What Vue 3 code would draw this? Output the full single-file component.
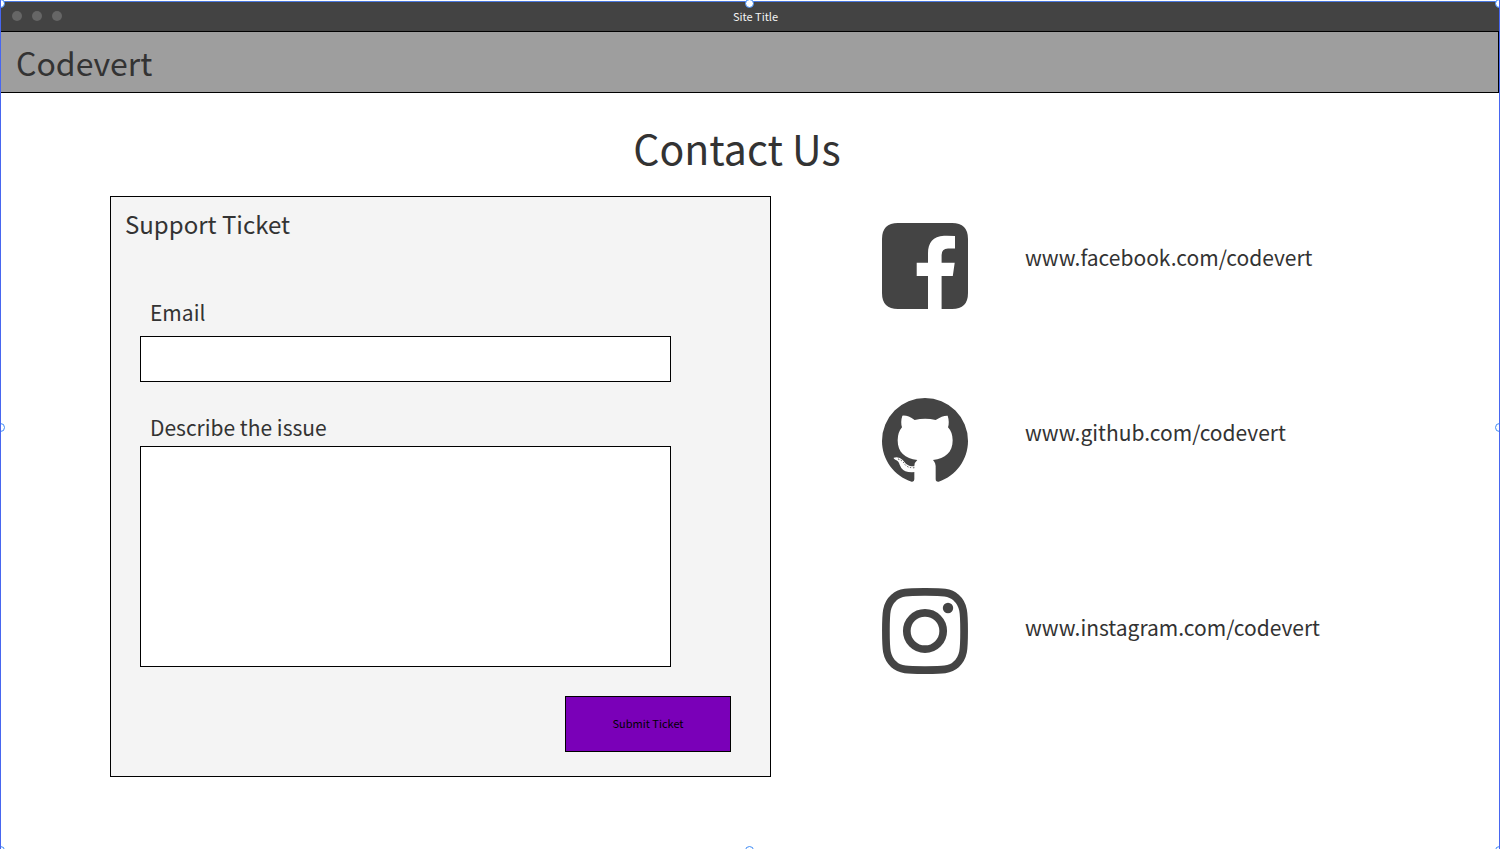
<script setup>
import { ref } from 'vue'

const email = ref('')
const issue = ref('')
const handles = ['nw', 'n', 'ne', 'w', 'e', 'sw', 's', 'se']
</script>

<template>
  <div class="frame">
    <div class="titlebar">
      <div class="dots"><i></i><i></i><i></i></div>
      <span class="site-title">Site Title</span>
    </div>
    <header class="brand-bar">
      <span class="brand">Codevert</span>
    </header>

    <main>
      <h1>Contact Us</h1>
      <div class="columns">
        <form class="ticket" @submit.prevent>
          <h2>Support Ticket</h2>
          <div class="fields">
            <label for="email">Email</label>
            <input id="email" v-model="email" type="email" />
            <label for="issue" class="issue-label">Describe the issue</label>
            <textarea id="issue" v-model="issue"></textarea>
          </div>
          <button type="submit">Submit Ticket</button>
        </form>

        <ul class="socials">
          <li>
            <svg viewBox="0 0 86 86" aria-hidden="true">
              <path fill="#444" d="M16 0H70Q86 0 86 16V70Q86 86 70 86H59.6V53H70.8L72.7 39.7H59.6V32Q59.6 25.4 66 25.4H73V12.9Q68 12.6 62 12.7C51 13 46 20 46 30V39.7H34.7V53H46V86H16Q0 86 0 70V16Q0 0 16 0Z" />
            </svg>
            <a href="#facebook">www.facebook.com/codevert</a>
          </li>
          <li>
            <svg viewBox="36 25 258 258" aria-hidden="true">
              <path fill="#444" d="M125 276C72 259 36 210 36 154A129 129 0 0 1 294 154C294 210 258 259 206 276Q197 277 197 268V236Q198 220 189 211C226 207 248 188 248 152Q248 128 234 113Q239 97 233 78Q218 77 197 91Q165 83 134 91Q113 76 97 78Q91 97 96 113Q83 128 83 152C83 188 105 207 142 211Q134 217 133 229V269Q133 277 125 276Z" />
              <path fill="#fff" d="M71 204Q88 200 98 211C108 223 113 231 135 230V247Q126 248 115 247Q96 244 89 225Q86 213 76 210Q70 207 71 204Z" />
              <path fill="none" stroke="#444" stroke-width="3" stroke-dasharray="4 5" d="M84 208Q96 211 103 222Q112 236 134 234" />
            </svg>
            <a href="#github">www.github.com/codevert</a>
          </li>
          <li class="instagram">
            <svg viewBox="0 0 86 86" aria-hidden="true">
              <path fill="none" stroke="#444" stroke-width="7.7" d="M43 3.9C60 3.9 68 3.8 74 9.5C82 16.5 82.1 25 82.1 43S82 69.500 74 76.500C68 82.200 60 82.100 43 82.100S18 82.200 12 76.500C4 69.500 3.900 61 3.900 43S4 16.500 12 9.500C18 3.800 26 3.900 43 3.900Z" />
              <circle cx="43" cy="43" r="18.2" fill="none" stroke="#444" stroke-width="7.7" />
              <circle cx="66" cy="20" r="5.2" fill="#444" />
            </svg>
            <a href="#instagram">www.instagram.com/codevert</a>
          </li>
        </ul>
      </div>
    </main>

    <span v-for="h in handles" :key="h" class="handle" :class="h"></span>
  </div>
</template>

<style>
body {
  margin: 0;
  background: #fff;
}
</style>

<style scoped>
* {
  box-sizing: border-box;
}
.frame {
  position: relative;
  min-height: 100vh;
  overflow: hidden;
  padding-top: 1px;
  border: solid #4766f0;
  border-width: 0 1px;
  font-family: "Noto Sans CJK SC", "Noto Sans", sans-serif;
  color: #333;
}
.titlebar {
  display: grid;
  grid-template-columns: 1fr auto 1fr;
  align-items: center;
  height: 30px;
  padding: 0 0 2px 11px;
  border-top: 1px solid #4a78e0;
  background: #434343;
}
.dots {
  display: flex;
  gap: 10px;
}
.dots i {
  width: 10px;
  height: 10px;
  border-radius: 50%;
  background: #666;
}
.site-title {
  font-size: 11px;
  line-height: 16px;
  color: #f4f4f4;
}
.brand-bar {
  display: flex;
  align-items: center;
  height: 62px;
  padding: 0 15px;
  border: solid #000;
  border-width: 1px 1px 1px 0;
  background: #9e9e9e;
}
.brand {
  font-size: 32px;
  line-height: 48px;
}
main {
  padding: 22px 109px 72px;
}
h1 {
  margin: 0 0 17px;
  padding-right: 26px;
  font-size: 41px;
  font-weight: 400;
  line-height: 64px;
  text-align: center;
}
.columns {
  display: grid;
  grid-template-columns: minmax(0, 661fr) minmax(0, 508fr);
  column-gap: 111px;
  align-items: start;
}
.ticket {
  display: flex;
  flex-direction: column;
  padding: 9px 39px 24px 14px;
  border: 1px solid #000;
  background: #f4f4f4;
}
h2 {
  margin: 0;
  font-size: 24px;
  font-weight: 400;
  line-height: 36px;
}
.fields {
  display: flex;
  flex-direction: column;
  margin: 54px 60px 29px 15px;
}
label {
  padding-left: 10px;
  font-size: 21px;
  line-height: 32px;
}
input,
textarea {
  display: block;
  width: 100%;
  margin: 0;
  padding: 8px 10px;
  border: 1px solid #000;
  border-radius: 0;
  background: #fff;
  font: inherit;
  font-size: 21px;
  color: #333;
  resize: none;
}
input {
  height: 46px;
  margin-top: 8px;
}
.issue-label {
  margin-top: 29px;
}
textarea {
  height: 221px;
  margin-top: 3px;
}
button {
  align-self: flex-end;
  width: 166px;
  height: 56px;
  padding: 0 0 2px;
  border: 1px solid #000;
  border-radius: 0;
  background: #7a00b8;
  font-family: inherit;
  font-size: 11px;
  line-height: 16px;
  color: #000;
}
.socials {
  display: flex;
  flex-direction: column;
  gap: 89px;
  margin: 0;
  padding: 27px 0 0;
  list-style: none;
}
.socials li {
  display: flex;
  align-items: flex-start;
  gap: 57px;
}
.socials svg {
  flex: none;
  width: 86px;
  height: 86px;
}
.socials a {
  margin-top: 18px;
  font-size: 21px;
  line-height: 32px;
  color: inherit;
  text-decoration: none;
}
.socials .instagram {
  margin-top: 15px;
}
.socials .instagram a {
  margin-top: 23px;
}
.handle {
  position: absolute;
  width: 9px;
  height: 9px;
  margin: -4px;
  border: 1px solid #3f8bf5;
  border-radius: 50%;
  background: #fff;
}
.nw, .n, .ne { top: 3px; }
.w, .e { top: calc(50% + 2px); }
.sw, .s, .se { top: calc(100% + 1px); }
.nw, .w, .sw { left: -1px; }
.n, .s { left: calc(50% - 1px); }
.ne, .e, .se { left: 100%; }
</style>
